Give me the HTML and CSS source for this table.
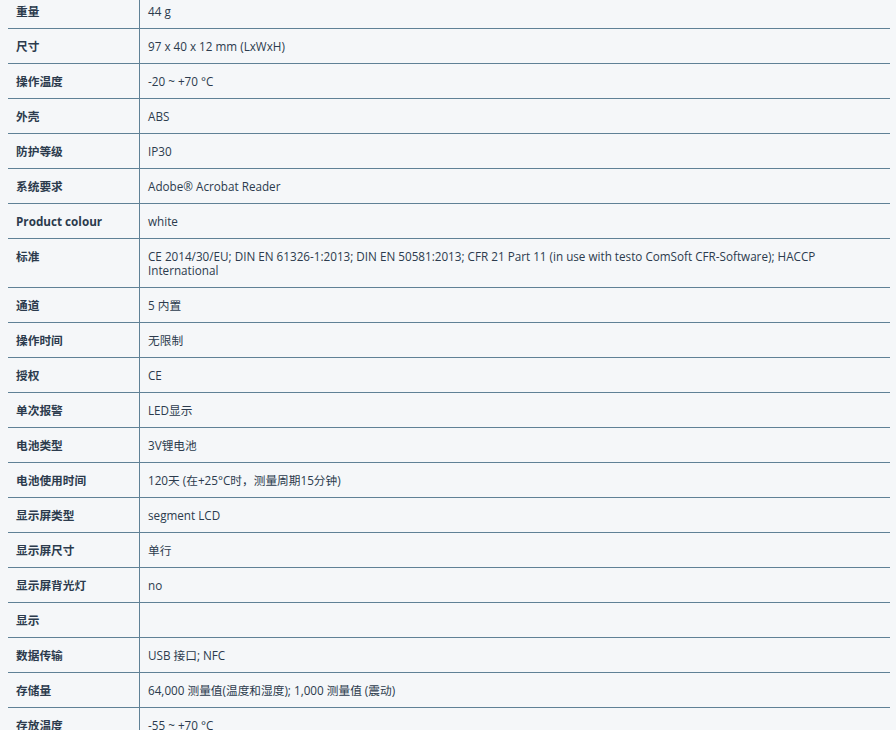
FILE: index.html
```html
<!DOCTYPE html>
<html>
<head>
<title>技术数据</title>
<link rel="stylesheet" href="styles.css">
</head>
<body>
<div class="page">
  <table class="specs">
    <tr><td class="key">重量</td><td class="val">44 g</td></tr>
    <tr><td class="key">尺寸</td><td class="val">97 x 40 x 12 mm (LxWxH)</td></tr>
    <tr><td class="key">操作温度</td><td class="val">-20 ~ +70 °C</td></tr>
    <tr><td class="key">外壳</td><td class="val">ABS</td></tr>
    <tr><td class="key">防护等级</td><td class="val">IP30</td></tr>
    <tr><td class="key">系统要求</td><td class="val">Adobe® Acrobat Reader</td></tr>
    <tr><td class="key">Product colour</td><td class="val">white</td></tr>
    <tr><td class="key">标准</td><td class="val">CE 2014/30/EU; DIN EN 61326-1:2013; DIN EN 50581:2013; CFR 21 Part 11 (in use with testo ComSoft CFR-Software); HACCP International</td></tr>
    <tr><td class="key">通道</td><td class="val">5 内置</td></tr>
    <tr><td class="key">操作时间</td><td class="val">无限制</td></tr>
    <tr><td class="key">授权</td><td class="val">CE</td></tr>
    <tr><td class="key">单次报警</td><td class="val">LED显示</td></tr>
    <tr><td class="key">电池类型</td><td class="val">3V锂电池</td></tr>
    <tr><td class="key">电池使用时间</td><td class="val">120天 (在+25°C时，测量周期15分钟)</td></tr>
    <tr><td class="key">显示屏类型</td><td class="val">segment LCD</td></tr>
    <tr><td class="key">显示屏尺寸</td><td class="val">单行</td></tr>
    <tr><td class="key">显示屏背光灯</td><td class="val">no</td></tr>
    <tr><td class="key">显示</td><td class="val"></td></tr>
    <tr><td class="key">数据传输</td><td class="val">USB 接口; NFC</td></tr>
    <tr><td class="key">存储量</td><td class="val">64,000 测量值(温度和湿度); 1,000 测量值 (震动)</td></tr>
    <tr><td class="key">存放温度</td><td class="val">-55 ~ +70 °C</td></tr>
  </table>
</div>
</body>
</html>
```

FILE: styles.css
```css
body {
  margin: 0;
  background-color: #ffffff;
  font-family: "Open Sans", "Noto Sans CJK SC", sans-serif;
  font-size: 11.7px;
  color: #2c3b4d;
}
.page {
  background-color: #f5f7f9;
  height: 730px;
  overflow: hidden;
  padding: 0 6px 0 8px;
}
.specs {
  width: 882px;
  margin-top: -6px;
  border-collapse: collapse;
}
.specs td {
  padding: 10px 7px 10px 8px;
  line-height: 14px;
  height: 14px;
  vertical-align: top;
  border-bottom: 1px solid #5f8196;
}
.key {
  width: 116px;
  font-weight: 700;
  border-right: 1px solid #5f8196;
}
.val {
  padding-left: 7px;
}
```
